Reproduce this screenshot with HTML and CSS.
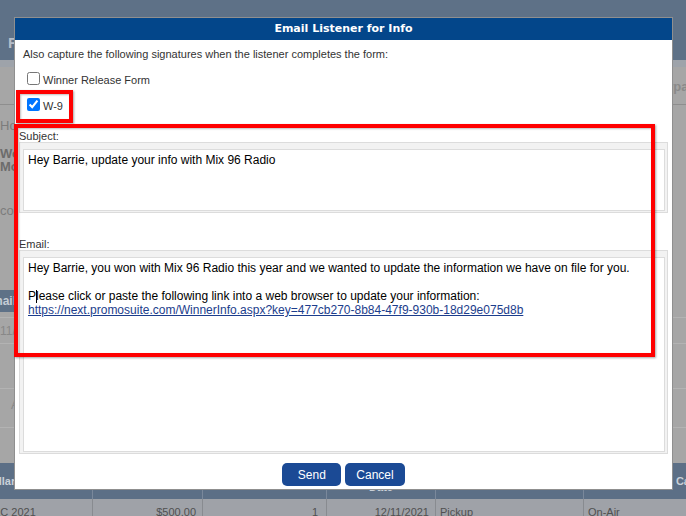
FILE: index.html
```html
<!DOCTYPE html>
<html lang="en">

<head>
    <meta charset="UTF-8">
    <meta name="viewport" content="width=device-width, initial-scale=1.0">
    <title>Email Listener for Info</title>
    <link rel="stylesheet" href="styles.css">
</head>

<body>
    <div class="page">
        <div class="topbar">Find Winner</div>
        <div class="strip"></div>
        <div class="toolbar">
            <span class="toolbar-link">Bypass</span>
        </div>
        <div class="content">
            <div class="crumb">Home</div>
            <div class="winner">
                <b>Work Phone</b>
                <b>Mobile Phone</b>
            </div>
            <div class="note">contact</div>
            <div class="tab">Email</div>
            <div class="rows">
                <div class="row row-a">11/12/2021</div>
                <div class="row row-b"></div>
                <div class="row row-c">Approved</div>
                <div class="row row-d"></div>
            </div>
            <table class="prizes">
                <colgroup>
                    <col style="width: 112px">
                    <col style="width: 110px">
                    <col style="width: 124px">
                    <col style="width: 109px">
                    <col style="width: 148px">
                    <col style="width: 232px">
                </colgroup>
                <tr>
                    <th class="first">Dollar</th>
                    <th>Value</th>
                    <th>Qty</th>
                    <th>Award<br>Date</th>
                    <th>Method</th>
                    <th>Category</th>
                </tr>
                <tr>
                    <td>DEC 2021</td>
                    <td class="num">$500.00</td>
                    <td class="num qty">1</td>
                    <td class="num">12/11/2021</td>
                    <td>Pickup</td>
                    <td>On-Air</td>
                </tr>
            </table>
        </div>
    </div>

    <div class="modal">
        <div class="modal-title">Email Listener for Info</div>
        <div class="modal-body">
            <p class="intro">Also capture the following signatures when the listener completes the form:</p>
            <label class="sig-row"><input type="checkbox"><span>Winner Release Form</span></label>
            <label class="sig-row"><input type="checkbox" checked><span>W-9</span></label>

            <div class="field-label">Subject:</div>
            <div class="field-frame subject">
                <div class="field-input">Hey Barrie, update your info with Mix 96 Radio</div>
            </div>

            <div class="field-label email-label">Email:</div>
            <div class="field-frame email">
                <div class="field-input">
                    <div>Hey Barrie, you won with Mix 96 Radio this year and we wanted to update the information we have on file for you.</div>
                    <div><br></div>
                    <div>P<span class="caret"></span>lease click or paste the following link into a web browser to update your information:</div>
                    <div><a href="#">https://next.promosuite.com/WinnerInfo.aspx?key=477cb270-8b84-47f9-930b-18d29e075d8b</a></div>
                </div>
            </div>
        </div>
        <div class="modal-actions">
            <button class="btn">Send</button>
            <button class="btn">Cancel</button>
        </div>
    </div>

    <div class="mark mark-w9"></div>
    <div class="mark mark-fields"></div>
</body>

</html>
```

FILE: styles.css
```css
* {
    margin: 0;
    padding: 0;
    box-sizing: border-box;
}

html,
body {
    width: 686px;
    height: 516px;
    overflow: hidden;
}

body {
    position: relative;
    background: #a6a6a6;
    font-family: "Liberation Sans", Arial, sans-serif;
}

/* dimmed page behind the dialog */
.page {
    width: 686px;
    height: 516px;
    overflow: hidden;
    color: #7c7c7c;
}

.topbar {
    height: 60px;
    background: #5e7187;
    padding: 34px 0 0 8px;
    color: #b5bdc8;
    font-size: 15px;
    font-weight: bold;
    line-height: 18px;
}

.strip {
    height: 7px;
    background: #9ea3aa;
}

.toolbar {
    height: 38px;
    border-bottom: 1px solid #8e8e8e;
    display: flex;
    justify-content: flex-end;
    padding-top: 12px;
}

.toolbar-link {
    margin-right: -17px;
    font-size: 13px;
    font-weight: bold;
    color: #8a8a8a;
    line-height: 16px;
}

.crumb {
    margin-top: 13px;
    font-size: 13px;
    line-height: 16px;
}

.winner {
    margin-top: 13px;
    display: flex;
    flex-direction: column;
    font-size: 13px;
    line-height: 13px;
    color: #6c6c6c;
}

.note {
    margin-top: 30px;
    font-size: 13px;
    line-height: 16px;
}

.tab {
    display: inline-block;
    margin-top: 71px;
    margin-left: -22px;
    padding: 0 6px;
    height: 22px;
    line-height: 22px;
    background: #5e7187;
    color: #c5ccd5;
    font-size: 12px;
    font-weight: bold;
}

.rows {
    margin-top: 5px;
}

.row {
    border-top: 1px solid #b3b3b3;
    font-size: 12px;
    color: #888;
}

.row-a {
    height: 26px;
    line-height: 26px;
}

.row-b {
    height: 45px;
}

.row-c {
    height: 39px;
    line-height: 32px;
    padding-left: 11px;
}

.row-d {
    height: 36px;
}

.prizes {
    margin-left: -20px;
    width: 835px;
    table-layout: fixed;
    border-collapse: collapse;
    font-size: 11px;
}

.prizes th {
    height: 36px;
    background: #5c6f86;
    color: #c9d0d8;
    font-weight: bold;
    line-height: 13px;
    border-left: 1px solid #7a889b;
}

.prizes th.first {
    text-align: left;
    padding-left: 3px;
}

.prizes td {
    height: 30px;
    background: #9fa2a8;
    color: #505050;
    padding: 0 6px 0 4px;
    border-left: 1px solid #888b90;
    vertical-align: top;
    padding-top: 7px;
}

.prizes td.num {
    text-align: right;
}

.prizes td.qty {
    padding-right: 8px;
}

/* dialog */
.modal {
    position: absolute;
    left: 14px;
    top: 17px;
    width: 659px;
    height: 473px;
    border: 1px solid #8f8f8f;
    background: #fff;
}

.modal-title {
    height: 22px;
    background: #03468a;
    color: #fff;
    font: bold 11px/22px "DejaVu Sans", Verdana, sans-serif;
    text-align: center;
}

.modal-body {
    padding: 0 4px;
    color: #333;
    font-size: 11px;
}

.intro {
    padding: 8px 4px 0;
    line-height: 13px;
}

.sig-row {
    display: flex;
    align-items: center;
    height: 19px;
    margin-top: 8px;
    padding-left: 4px;
}

.sig-row + .sig-row {
    margin-top: 7px;
}

.sig-row input {
    margin: 3px 3px 3px 4px;
    width: 13px;
    height: 13px;
}

.sig-row span {
    padding-top: 3px;
    line-height: 13px;
}

.field-label {
    margin-top: 16px;
    line-height: 12px;
}

.field-label.email-label {
    margin-top: 25px;
}

.field-frame {
    border: 1px solid #dcdcdc;
    background: #f2f2f2;
    padding: 6px 2px 1px 3px;
}

.field-frame.subject {
    height: 71px;
}

.field-frame.email {
    height: 204px;
}

.field-input {
    height: 100%;
    background: #fff;
    border: 1px solid #dcdcdc;
    padding: 3px 4px;
    font-size: 12px;
    line-height: 14px;
    color: #000;
}

.field-input a {
    color: #1c3d8c;
}

.caret {
    display: inline-block;
    width: 1px;
    height: 13px;
    margin-right: -1px;
    vertical-align: -3px;
    background: #000;
}

.modal-actions {
    display: flex;
    justify-content: center;
    gap: 4px;
    margin-top: 9px;
}

.btn {
    height: 23px;
    min-width: 59px;
    padding: 0 11px;
    border: 0;
    border-radius: 5px;
    background: #1b4a95;
    color: #fff;
    font: 12px "Liberation Sans", Arial, sans-serif;
}

/* red annotation boxes */
.mark {
    position: absolute;
    border: 4px solid #ff0000;
    box-shadow: 1px 1px 2px rgba(0, 0, 0, 0.35), inset 1px 1px 2px rgba(0, 0, 0, 0.25);
}

.mark-w9 {
    left: 16px;
    top: 90px;
    width: 57px;
    height: 33px;
}

.mark-fields {
    left: 14px;
    top: 124px;
    width: 641px;
    height: 233px;
}
```
